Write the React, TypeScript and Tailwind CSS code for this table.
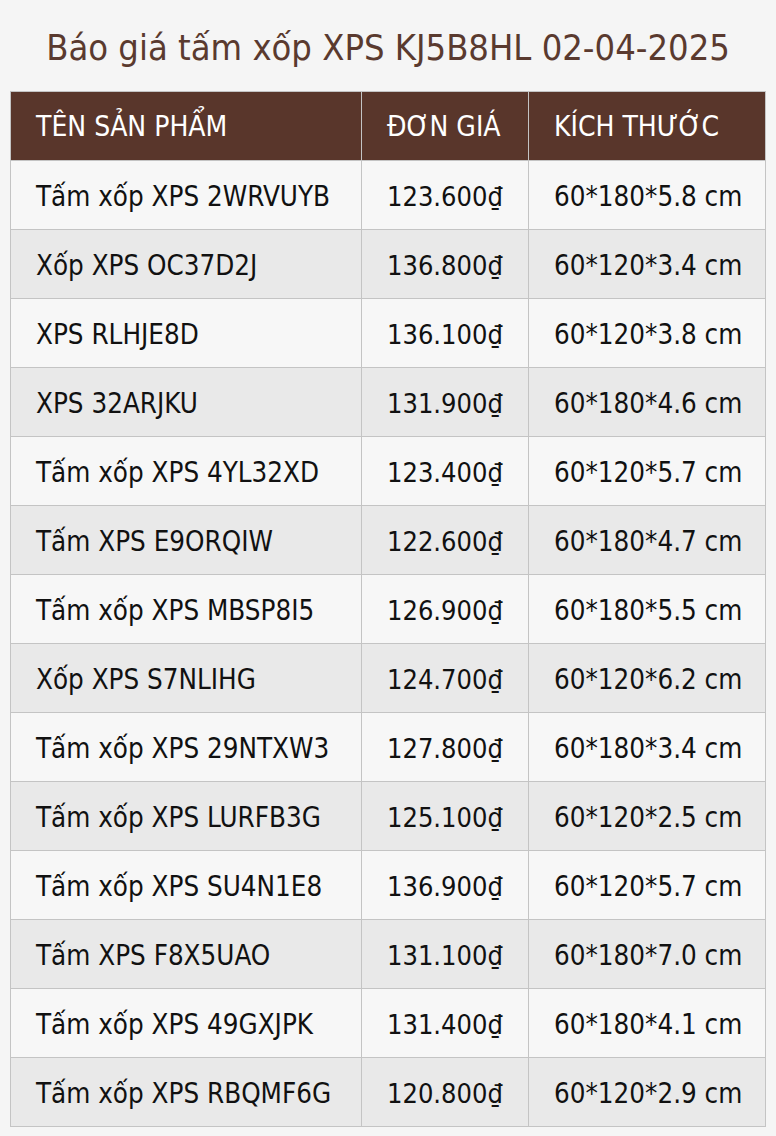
import React from "react";

const rows: [string, string, string][] = [
  ["Tấm xốp XPS 2WRVUYB", "123.600₫", "60*180*5.8 cm"],
  ["Xốp XPS OC37D2J", "136.800₫", "60*120*3.4 cm"],
  ["XPS RLHJE8D", "136.100₫", "60*120*3.8 cm"],
  ["XPS 32ARJKU", "131.900₫", "60*180*4.6 cm"],
  ["Tấm xốp XPS 4YL32XD", "123.400₫", "60*120*5.7 cm"],
  ["Tấm XPS E9ORQIW", "122.600₫", "60*180*4.7 cm"],
  ["Tấm xốp XPS MBSP8I5", "126.900₫", "60*180*5.5 cm"],
  ["Xốp XPS S7NLIHG", "124.700₫", "60*120*6.2 cm"],
  ["Tấm xốp XPS 29NTXW3", "127.800₫", "60*180*3.4 cm"],
  ["Tấm xốp XPS LURFB3G", "125.100₫", "60*120*2.5 cm"],
  ["Tấm xốp XPS SU4N1E8", "136.900₫", "60*120*5.7 cm"],
  ["Tấm XPS F8X5UAO", "131.100₫", "60*180*7.0 cm"],
  ["Tấm xốp XPS 49GXJPK", "131.400₫", "60*180*4.1 cm"],
  ["Tấm xốp XPS RBQMF6G", "120.800₫", "60*120*2.9 cm"],
];

export default function App() {
  return (
    <div className="min-h-[1136px] bg-[#f5f5f5] px-[10px] pt-[25px] font-['DejaVu_Sans_Condensed','DejaVu_Sans',sans-serif]">
      <h1 className="text-center text-[36px] leading-[46px] text-[#5a3a2f]">
        Báo giá tấm xốp XPS KJ5B8HL 02-04-2025
      </h1>
      <table className="mt-[20px] w-[756px] border-collapse border border-[#c4c4c4] text-[27.5px]">
        <thead>
          <tr className="h-[69px] bg-[#59362b] text-left text-[28px] text-white">
            <th className="w-[351px] border border-[#c4c4c4] pl-[25px] pt-[2px] font-normal">TÊN SẢN PHẨM</th>
            <th className="w-[167px] border border-[#c4c4c4] pl-[25px] pt-[2px] font-normal">ĐƠN GIÁ</th>
            <th className="border border-[#c4c4c4] pl-[25px] pt-[2px] font-normal">KÍCH THƯỚC</th>
          </tr>
        </thead>
        <tbody className="text-[#111111]">
          {rows.map((r, i) => (
            <tr key={i} className={`h-[69px] ${i % 2 === 0 ? "bg-[#f7f7f7]" : "bg-[#e9e9e9]"}`}>
              <td className="border border-[#c4c4c4] pl-[25px] pt-[4px]">{r[0]}</td>
              <td className="border border-[#c4c4c4] pl-[25px] pt-[4px] text-[27px]">{r[1]}</td>
              <td className="border border-[#c4c4c4] pl-[25px] pt-[4px]">{r[2]}</td>
            </tr>
          ))}
        </tbody>
      </table>
    </div>
  );
}
